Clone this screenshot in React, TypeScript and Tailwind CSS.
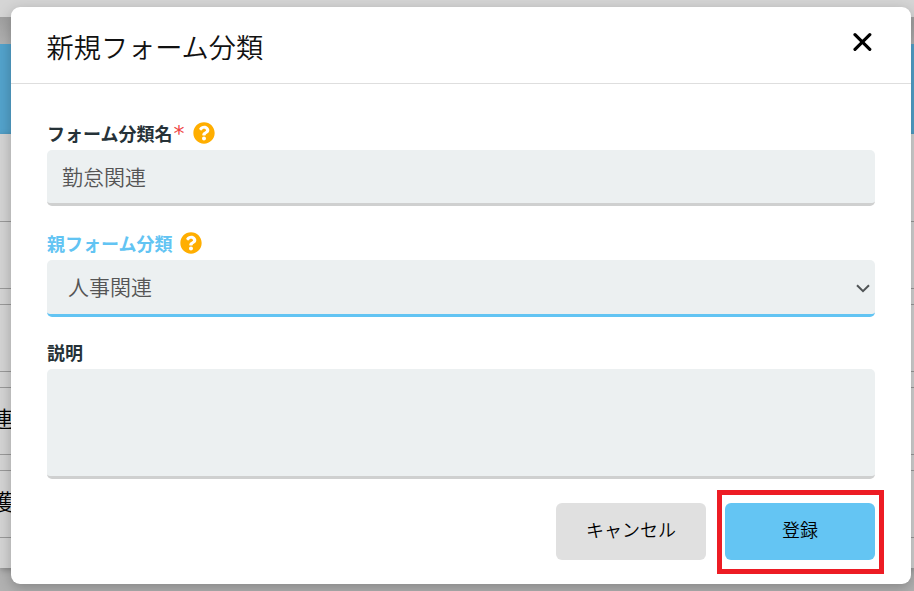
import React from "react";

const HelpIcon = () => (
  <svg xmlns="http://www.w3.org/2000/svg" className="w-[22px] h-[22px] shrink-0" viewBox="0 0 512 512" fill="#ffae00">
    <path d="M504 256c0 136.997-111.043 248-248 248S8 392.997 8 256C8 119.083 119.043 8 256 8s248 111.083 248 248zM262.655 90c-54.497 0-89.255 22.957-116.549 63.758-3.536 5.286-2.353 12.415 2.715 16.258l34.699 26.31c5.205 3.947 12.621 3.008 16.665-2.122 17.864-22.658 30.113-35.797 57.303-35.797 20.429 0 45.698 13.148 45.698 32.958 0 14.976-12.363 22.667-32.534 33.976C247.128 238.528 216 254.941 216 296v4c0 6.627 5.373 12 12 12h56c6.627 0 12-5.373 12-12v-1.333c0-28.462 83.186-29.647 83.186-106.667 0-58.002-60.165-102-116.531-102zM256 338c-25.365 0-46 20.635-46 46 0 25.364 20.635 46 46 46s46-20.636 46-46c0-25.365-20.635-46-46-46z" />
  </svg>
);

const CloseIcon = () => (
  <svg xmlns="http://www.w3.org/2000/svg" className="w-[19px] h-[18px]" viewBox="0 0 19 18" fill="none" stroke="#000" strokeWidth={3.2} strokeLinecap="round">
    <path d="M2 1.7l14.8 14.6M16.8 1.7L2 16.3" />
  </svg>
);

const ChevronIcon = () => (
  <svg xmlns="http://www.w3.org/2000/svg" className="w-[14px] h-[9px]" viewBox="0 0 14 9" fill="none" stroke="#505456" strokeWidth={2}>
    <path d="M1 1.2l6 6 6-6" />
  </svg>
);

const Label = ({
  children,
  active,
}: {
  children: React.ReactNode;
  active?: boolean;
}) => (
  <span
    className={`text-[18px] leading-[26px] font-bold whitespace-nowrap ${
      active ? "text-[#62c4f3]" : "text-[#263238]"
    }`}
  >
    {children}
  </span>
);

const pageRows = ["", "", "連", "獲"];

// Dimmed list page behind the dialog
const PageBehind = () => (
  <div className="h-full flex flex-col bg-[#b2b2b2]">
    <div className="h-[17px] bg-[#d5d5d5]" />
    <div className="h-[27px] bg-linear-to-b from-[#a0a0a0] to-[#b2b2b2]" />
    <div className="h-[90px] bg-[#53a3cc]" />
    <div className="h-[434px] pt-[87px] flex flex-col gap-[15px] bg-[#d4d4d4] shadow-[0_2px_6px_rgba(0,0,0,0.25)]">
      {pageRows.map((text, i) => (
        <div key={i} className="h-[68px] pb-2 border-y border-[#999] flex items-center text-[22px] font-[350] text-black">
          <span className="-ml-[9px]">{text}</span>
        </div>
      ))}
    </div>
  </div>
);

const App: React.FC = () => {
  return (
    <div
      className="relative w-[914px] h-[591px] overflow-hidden"
      style={{ fontFamily: '"Noto Sans CJK JP", "Noto Sans", sans-serif' }}
    >
      <PageBehind />

      <div className="absolute inset-0 pl-[11px] pt-[7px]">
        <div role="dialog" className="w-[900px] h-[577px] rounded-[9px] bg-white shadow-[0_4px_14px_rgba(0,0,0,0.25)] flex flex-col">
          <header className="h-[77px] shrink-0 pl-[35.5px] pr-[39px] flex justify-between border-b border-[#dedede]">
            <h1 className="mt-[19px] text-[27.2px] leading-10 font-[350] text-[#111]">新規フォーム分類</h1>
            <button aria-label="閉じる" className="mt-[26px] h-[18px]">
              <CloseIcon />
            </button>
          </header>

          <div className="px-9 pt-9 flex flex-col">
            <div className="h-[30px] flex items-start">
              <Label>フォーム分類名</Label>
              <span className="w-3 pl-px text-[22px] leading-[27px] text-[#ef4444] font-['DejaVu_Sans',sans-serif]">*</span>
              <span className="ml-[8.5px] mt-[1.5px]">
                <HelpIcon />
              </span>
            </div>
            <div className="h-14 rounded-[5px] border-b-[3px] border-[#cfd0d0] bg-[#ecf0f1] px-[15px] flex items-center text-[21px] font-[350] text-[#555]">
              勤怠関連
            </div>

            <div className="mt-6 h-[30px] flex items-start">
              <Label active>親フォーム分類</Label>
              <span className="ml-[7.5px] mt-[1.5px]">
                <HelpIcon />
              </span>
            </div>
            <div className="h-[57px] rounded-[5px] border-b-[3px] border-[#62c4f3] bg-[#ecf0f1] pl-[21px] pr-[5px] flex items-center justify-between text-[21px] font-[350] text-[#555]">
              <span className="pb-px">人事関連</span>
              <span className="pt-[2px]">
                <ChevronIcon />
              </span>
            </div>

            <div className="mt-[22px] h-[30px] flex items-start">
              <Label>説明</Label>
            </div>
            <div className="h-[110px] rounded-[5px] border-b-[3px] border-[#cfd0d0] bg-[#ecf0f1]" />

            <div className="mt-6 flex justify-end gap-[19px] text-[18px] font-[350] text-black">
              <button className="w-[150px] h-[57px] rounded-[6px] bg-[#e0e0e0] pb-1">キャンセル</button>
              <div className="relative">
                <button className="w-[150px] h-[57px] rounded-[6px] bg-[#64c5f3] pb-1">登録</button>
                <div className="absolute -top-[13px] -left-2 w-[167px] h-[84px] border-[5px] border-[#ed1c24] pointer-events-none" />
              </div>
            </div>
          </div>
        </div>
      </div>
    </div>
  );
};

export default App;
